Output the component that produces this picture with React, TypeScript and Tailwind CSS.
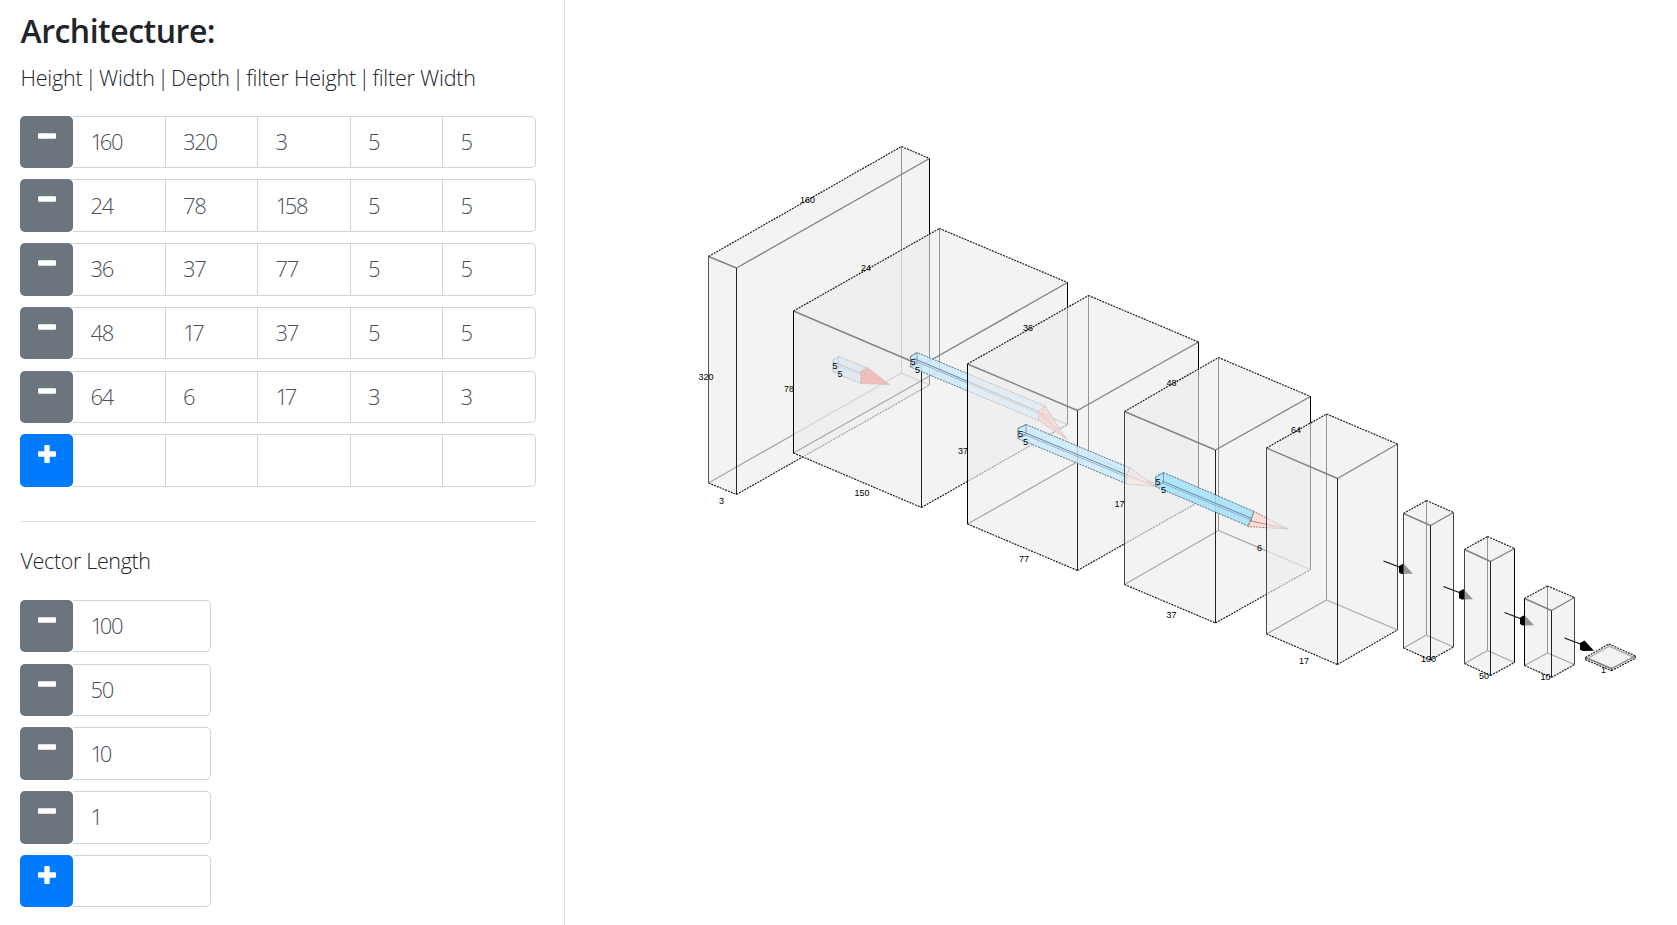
import React from "react";

type Pt = [number, number];

interface Prism {
  left: Pt;
  front: Pt;
  back: Pt;
  right: Pt;
  depth: number;
  leftColor?: string;
  rightColor?: string;
}

const prisms: Prism[] = [
  { left: [708.5, 256.5], front: [736.5, 268], back: [901.5, 146.5], right: [929.5, 158.5], depth: 226.5, leftColor: "#555", rightColor: "#000" },
  { left: [793.5, 311], front: [921.5, 365.5], back: [939.5, 228.5], right: [1067.5, 282.5], depth: 142, leftColor: "#000", rightColor: "#000" },
  { left: [967.5, 364], front: [1077.5, 410.5], back: [1088.5, 295.5], right: [1198.5, 342], depth: 160, leftColor: "#000", rightColor: "#000" },
  { left: [1124.5, 411.5], front: [1215.5, 450], back: [1218.5, 357.5], right: [1310.5, 396.5], depth: 173, rightColor: "#000" },
  { left: [1266.5, 448], front: [1337.5, 478.5], back: [1326.5, 414], right: [1397.5, 444], depth: 186 },
  { left: [1403.5, 513.5], front: [1430.5, 525.5], back: [1426.5, 500.5], right: [1453.5, 512.5], depth: 134.5 },
  { left: [1464.5, 549.5], front: [1490.5, 561.5], back: [1487.5, 536.5], right: [1514.5, 548.5], depth: 114, rightColor: "#000" },
  { left: [1524.5, 598.5], front: [1551.5, 610.5], back: [1547.5, 586], right: [1574.5, 597.5], depth: 67, leftColor: "#000" },
  { left: [1585.5, 657.5], front: [1611.5, 668.5], back: [1609, 644], right: [1635.5, 656], depth: 2.2 },
];

const down = (p: Pt, d: number): Pt => [p[0], p[1] + d];
const pts = (list: Pt[]) => list.map((p) => p.join(",")).join(" ");

function Line({ a, b, color = "#222", dash, w = 1 }: { a: Pt; b: Pt; color?: string; dash?: string; w?: number }) {
  return <line x1={a[0]} y1={a[1]} x2={b[0]} y2={b[1]} stroke={color} strokeWidth={w} strokeDasharray={dash} />;
}

function Cuboid({ p }: { p: Prism }) {
  const bl = down(p.left, p.depth);
  const bf = down(p.front, p.depth);
  const bb = down(p.back, p.depth);
  const br = down(p.right, p.depth);
  const edge = "2 1";
  return (
    <g>
      <Line a={p.back} b={bb} color="#000" />
      <Line a={bl} b={bb} color="#333" w={1.3} />
      <Line a={bb} b={br} color="#333" w={1.3} />
      <polygon points={pts([p.left, p.back, p.right, br, bf, bl])} fill="#ececec" fillOpacity={0.635} />
      <Line a={p.left} b={p.front} color="#838383" w={1.4} />
      <Line a={p.front} b={p.right} color="#838383" w={1.4} />
      <Line a={p.left} b={p.back} dash={edge} w={1.2} />
      <Line a={p.back} b={p.right} dash={edge} w={1.2} />
      <Line a={bl} b={bf} dash={edge} w={1.2} />
      <Line a={bf} b={br} dash={edge} w={1.2} />
      <Line a={p.left} b={bl} color={p.leftColor ?? "#444"} />
      <Line a={p.front} b={bf} color="#222" />
      <Line a={p.right} b={br} color={p.rightColor ?? "#444"} />
    </g>
  );
}

interface Kernel {
  body: Pt[];
  end: Pt[];
  ridge: [Pt, Pt];
  tip: Pt[];
  fill: string;
  opacity: number;
  tipFill: string;
}

const kernels: Kernel[] = [
  {
    body: [[833, 360], [838.5, 356.5], [867.5, 368], [861, 383.5], [833, 372]],
    end: [[833, 360], [838.5, 356.5], [838.5, 368], [833, 372]],
    ridge: [[833, 362], [861, 373]],
    tip: [[860.5, 371.5], [867.5, 367.5], [889.5, 384.5], [861, 383.5]],
    fill: "#bfe3f7",
    opacity: 0.75,
    tipFill: "#ff5555",
  },
  {
    body: [[910.5, 356.5], [917, 352.5], [1045, 406], [1038.5, 420.5], [910.5, 367]],
    end: [[910.5, 356.5], [917, 352.5], [917, 363.5], [910.5, 367]],
    ridge: [[914, 358.5], [1038.5, 411.5]],
    tip: [[1038.5, 411.5], [1045, 406], [1066.5, 439], [1038.5, 420.5]],
    fill: "#cdeafb",
    opacity: 0.85,
    tipFill: "#ffb4b4",
  },
  {
    body: [[1018, 428.5], [1026, 424.5], [1130, 468], [1126, 483.5], [1018, 438.5]],
    end: [[1018, 428.5], [1026, 424.5], [1026, 434.5], [1018, 438.5]],
    ridge: [[1022, 431.5], [1127, 475]],
    tip: [[1127, 475], [1130, 468], [1156, 486.5], [1126, 484]],
    fill: "#cdeafb",
    opacity: 0.85,
    tipFill: "#ffe0e0",
  },
  {
    body: [[1155.5, 477], [1163.5, 472.5], [1254, 511.5], [1248, 526], [1155.5, 486.5]],
    end: [[1155.5, 477], [1163.5, 472.5], [1163.5, 482.5], [1155.5, 486.5]],
    ridge: [[1162, 481], [1252, 518.5]],
    tip: [[1251, 521], [1254, 511.5], [1288, 529], [1248, 526.5]],
    fill: "#a9e2fc",
    opacity: 0.9,
    tipFill: "#ffd9d4",
  },
];

function KernelShape({ k }: { k: Kernel }) {
  return (
    <g>
      <polygon points={pts(k.body)} fill={k.fill} fillOpacity={k.opacity} stroke="#4b6a7c" strokeWidth={0.9} strokeDasharray="2 1" />
      <polygon points={pts(k.end)} fill="none" stroke="#6b8a9c" strokeWidth={0.8} />
      <Line a={k.ridge[0]} b={k.ridge[1]} color="#6787a0" />
      <Line a={down(k.ridge[0], 2)} b={down(k.ridge[1], 2)} color="#86a6ba" w={0.8} />
      <polygon points={pts(k.tip)} fill={k.tipFill} fillOpacity={0.85} stroke="#8c5a5a" strokeWidth={0.8} strokeDasharray="2 1" />
      <Line a={k.tip[0]} b={k.tip[2]} color="#a6706f" w={0.8} />
    </g>
  );
}

const arrows: Pt[] = [
  [1383.5, 561],
  [1443.5, 586.5],
  [1504.5, 612.5],
  [1564.5, 638],
];

function Arrow({ at: [x, y] }: { at: Pt }) {
  return (
    <g>
      <line x1={x} y1={y} x2={x + 17} y2={y + 6.5} stroke="#111" strokeWidth={1.2} />
      <polygon
        points={pts([[x + 15.5, y + 5], [x + 20, y + 2.5], [x + 29.5, y + 12.8], [x + 18, y + 13], [x + 15.5, y + 11.5]])}
        fill="#000"
      />
    </g>
  );
}

const labels: [number, number, string][] = [
  [807.5, 202.5, "160"], [706, 379.5, "320"], [721.5, 503.5, "3"],
  [866, 271, "24"], [789, 391.5, "78"], [862, 495.5, "150"],
  [1028, 331, "36"], [963, 453.5, "37"], [1024, 562, "77"],
  [1171.5, 385.5, "48"], [1119.5, 507, "17"], [1171.5, 618, "37"],
  [1296, 432.5, "64"], [1259.5, 550.5, "6"], [1304, 663.5, "17"],
  [1428.5, 662, "100"], [1484, 678.5, "50"], [1545.5, 679.5, "10"], [1603.5, 672.5, "1"],
  [835, 369, "5"], [840, 377, "5"],
  [913, 364.5, "5"], [917.5, 372.5, "5"],
  [1020.5, 436.5, "5"], [1025.5, 444.5, "5"],
  [1158, 485, "5"], [1163.5, 493, "5"],
];

function Diagram() {
  return (
    <svg className="block" width={1112} height={925} viewBox="565 0 1112 925">
      {prisms.map((p, i) => (
        <g key={i}>
          {i >= 5 && <Arrow at={arrows[i - 5]} />}
          <Cuboid p={p} />
          {i > 0 && i < 4 && <KernelShape k={kernels[i]} />}
          {i === 0 && <KernelShape k={kernels[0]} />}
        </g>
      ))}
      <g fill="#000" fontFamily="'Liberation Sans', Arial, sans-serif" fontSize={9} textAnchor="middle">
        {labels.map(([x, y, t], i) => (
          <text key={i} x={x} y={y}>{t}</text>
        ))}
      </g>
    </svg>
  );
}

function RowButton({ add }: { add?: boolean }) {
  return (
    <button
      className={
        add
          ? "flex h-full w-[53px] shrink-0 justify-center rounded-[5px] bg-[#007bff] pt-[11px]"
          : "flex h-full w-[53px] shrink-0 justify-center rounded-[5px] bg-[#6c757d] pt-[11px]"
      }
    >
      <svg width="18" height="18" viewBox="0 0 18 18" fill="#fff">
        <rect x="0" y="6.3" width="18" height="5.4" rx="1" />
        {add && <rect x="6.3" y="0" width="5.4" height="18" rx="1" />}
      </svg>
    </button>
  );
}

function Digits({ value }: { value: string }) {
  return (
    <span>
      {value.split("").map((d, i) => (
        <span key={i} className={d === "1" ? "-mr-[2px]" : ""}>{d}</span>
      ))}
    </span>
  );
}

function Cell({ value, last, className }: { value: string; last: boolean; className: string }) {
  return (
    <div
      className={`${className} flex h-full items-center border-y border-r border-[#ced4da] bg-white pb-px pl-[17.5px] text-[22px] font-light tracking-[-1.3px] text-[#495057] ${last ? "rounded-r-[5px]" : ""}`}
    >
      <Digits value={value} />
    </div>
  );
}

function InputRow({ values, add, cell }: { values: string[]; add?: boolean; cell: string }) {
  return (
    <div className="flex h-[52.5px]">
      <RowButton add={add} />
      {values.map((v, i) => (
        <Cell key={i} value={v} last={i === values.length - 1} className={cell} />
      ))}
    </div>
  );
}

const layers = [
  ["160", "320", "3", "5", "5"],
  ["24", "78", "158", "5", "5"],
  ["36", "37", "77", "5", "5"],
  ["48", "17", "37", "5", "5"],
  ["64", "6", "17", "3", "3"],
];
const vectors = ["100", "50", "10", "1"];
const columns = ["Height", "Width", "Depth", "filter Height", "filter Width"];

export default function App() {
  return (
    <div className="flex h-[925px] w-[1677px] overflow-hidden bg-white font-['Open_Sans','Noto_Sans',sans-serif]">
      <aside className="h-full w-[565px] shrink-0 border-r border-[#dfe1e4] pl-5">
        <h2 className="h-[58px] pt-[12px] pl-[0.5px] text-[32px] leading-[38px] font-semibold tracking-[-0.5px] text-[#212529] [font-stretch:88%]">Architecture:</h2>
        <p className="h-[57.5px] pt-[3.5px] pl-[0.5px] text-[21.5px] leading-[32px] font-light tracking-[-0.2px] whitespace-nowrap text-[#212529]">
          {columns.map((c, i) => (
            <React.Fragment key={c}>
              {i > 0 && (
                <>
                  {" "}
                  <span className="-mx-[2.9px]">|</span>{" "}
                </>
              )}
              {c}
            </React.Fragment>
          ))}
        </p>
        <div className="flex flex-col gap-[11.25px]">
          {layers.map((l, i) => (
            <InputRow key={i} values={l} cell="w-[92.5px]" />
          ))}
          <InputRow values={["", "", "", "", ""]} add cell="w-[92.5px]" />
        </div>
        <div className="mt-[34px] mr-[28.5px] h-px bg-[#dfe1e4]" />
        <p className="mt-[23.5px] h-[54.5px] pl-[0.5px] text-[21.5px] leading-[32px] font-light tracking-[-0.35px] text-[#212529]">Vector Length</p>
        <div className="flex flex-col gap-[11.25px]">
          {vectors.map((v) => (
            <InputRow key={v} values={[v]} cell="w-[137.8px]" />
          ))}
          <InputRow values={[""]} add cell="w-[137.8px]" />
        </div>
      </aside>
      <main className="flex-1">
        <Diagram />
      </main>
    </div>
  );
}
